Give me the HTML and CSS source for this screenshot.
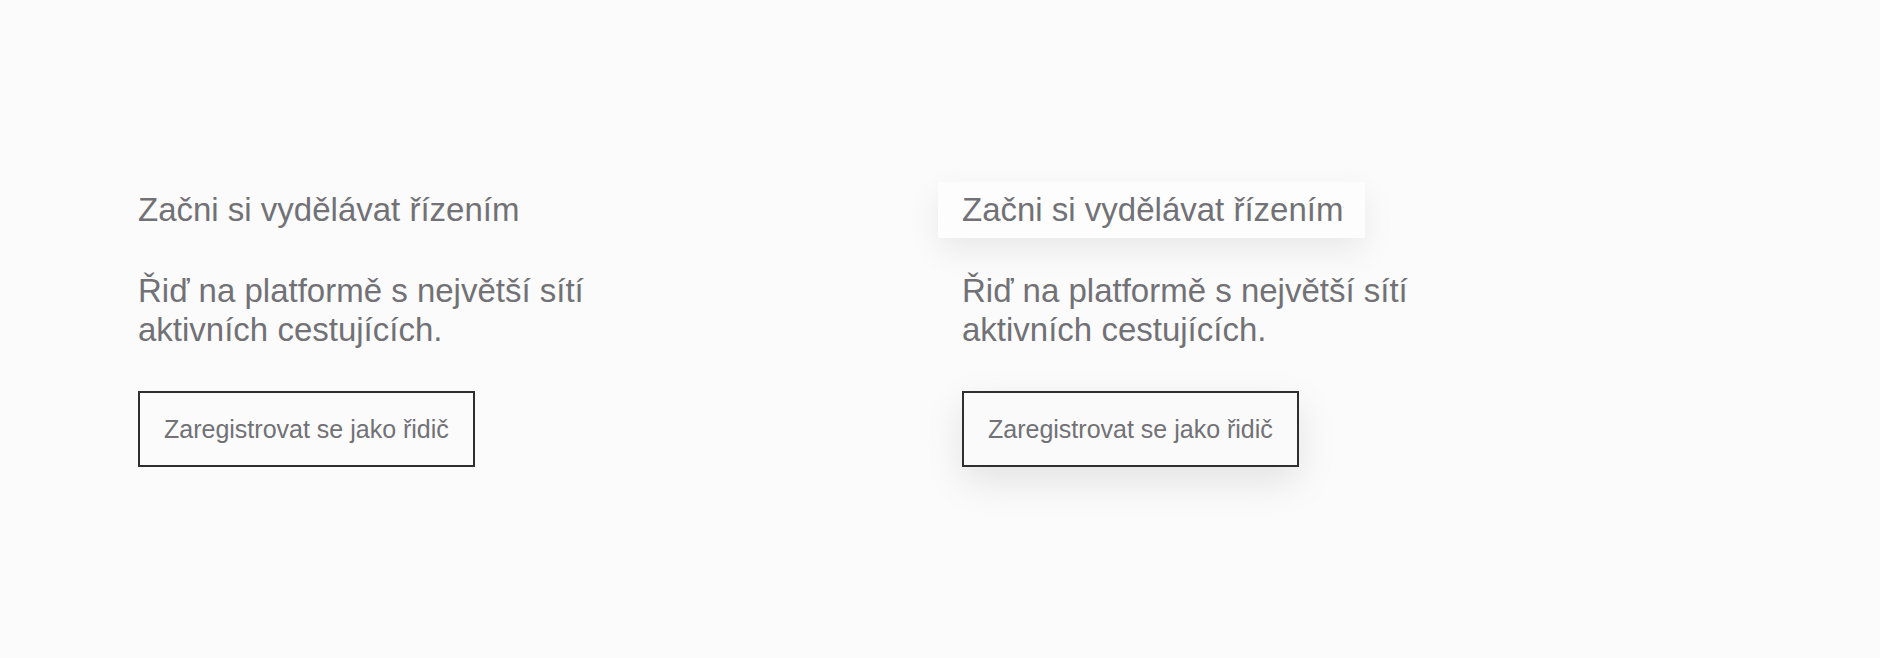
FILE: index.html
```html
<!DOCTYPE html>
<html lang="cs">
<head>
<meta charset="utf-8">
<title>Řiď</title>
<link rel="stylesheet" href="styles.css">
</head>
<body>
<main class="stage">
  <section class="card">
    <h2 class="title">Začni si vydělávat řízením</h2>
    <p class="lead">Řiď na platformě s největší sítí aktivních cestujících.</p>
    <a class="btn" href="#">Zaregistrovat se jako řidič</a>
  </section>
  <section class="card card--active">
    <h2 class="title">Začni si vydělávat řízením</h2>
    <p class="lead">Řiď na platformě s největší sítí aktivních cestujících.</p>
    <a class="btn" href="#">Zaregistrovat se jako řidič</a>
  </section>
</main>
</body>
</html>
```
FILE: styles.css
```css
html, body {
  margin: 0;
  padding: 0;
  background: #fbfbfb;
}
body {
  font-family: "Liberation Sans", Arial, sans-serif;
  color: #717176;
}
.stage {
  height: 658px;
  box-sizing: border-box;
  padding: 182px 0 0 138px;
  display: grid;
  grid-template-columns: 824px 1fr;
  align-items: start;
}
.card {
  display: flex;
  flex-direction: column;
  align-items: flex-start;
}
.title {
  margin: 0 0 33px 0;
  font-weight: 400;
  font-size: 33px;
  line-height: 56px;
}
.lead {
  margin: 0 0 42px 0;
  width: 480px;
  font-size: 33px;
  line-height: 39px;
}
.btn {
  display: inline-block;
  padding: 24px 24px;
  border: 2px solid #2f2f31;
  color: #717176;
  text-decoration: none;
  font-size: 25px;
  line-height: 24px;
}
.card--active .title {
  margin-left: -24px;
  padding: 0 22px 0 24px;
  background: #fdfdfd;
  box-shadow: 0 12px 32px rgba(0, 0, 0, 0.075);
}
.card--active .btn {
  background: #fafafa;
  box-shadow: 0 14px 38px rgba(0, 0, 0, 0.10);
}
```
